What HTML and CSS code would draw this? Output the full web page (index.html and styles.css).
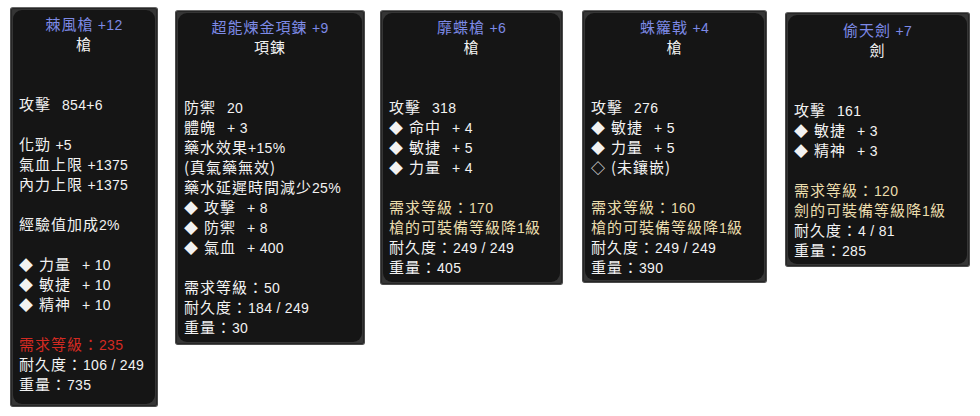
FILE: index.html
```html
<!DOCTYPE html>
<html>
  <head>
  <meta charset="utf-8">
  <title>物品說明</title>
  <link rel="stylesheet" href="styles.css">
  </head>
  <body>

<div id="items">

  <div class="tip tip1">
    <div class="tip-in">
      <div class="ln title">棘風槍 <span class="v">+12</span></div>
      <div class="ln type">槍</div>
      <div class="sp"></div>
      <div class="sp"></div>
      <div class="ln">攻擊<span class="gap"></span><span class="v">854+6</span></div>
      <div class="sp"></div>
      <div class="ln">化勁 <span class="v">+5</span></div>
      <div class="ln">氣血上限 <span class="v">+1375</span></div>
      <div class="ln">內力上限 <span class="v">+1375</span></div>
      <div class="sp"></div>
      <div class="ln">經驗值加成<span class="v">2%</span></div>
      <div class="sp"></div>
      <div class="ln"><span class="gem">◆</span>力量<span class="gap"></span><span class="v">+ 10</span></div>
      <div class="ln"><span class="gem">◆</span>敏捷<span class="gap"></span><span class="v">+ 10</span></div>
      <div class="ln"><span class="gem">◆</span>精神<span class="gap"></span><span class="v">+ 10</span></div>
      <div class="sp"></div>
      <div class="ln req">需求等級：<span class="v">235</span></div>
      <div class="ln">耐久度：<span class="v">106 / 249</span></div>
      <div class="ln">重量：<span class="v">735</span></div>
    </div>
  </div>

  <div class="tip tip2">
    <div class="tip-in">
      <div class="ln title">超能煉金項鍊 <span class="v">+9</span></div>
      <div class="ln type">項鍊</div>
      <div class="sp"></div>
      <div class="sp"></div>
      <div class="ln">防禦<span class="gap"></span><span class="v">20</span></div>
      <div class="ln">體魄<span class="gap"></span><span class="v">+ 3</span></div>
      <div class="ln">藥水效果<span class="v">+15%</span></div>
      <div class="ln">(真氣藥無效)</div>
      <div class="ln">藥水延遲時間減少<span class="v">25%</span></div>
      <div class="ln"><span class="gem">◆</span>攻擊<span class="gap"></span><span class="v">+ 8</span></div>
      <div class="ln"><span class="gem">◆</span>防禦<span class="gap"></span><span class="v">+ 8</span></div>
      <div class="ln"><span class="gem">◆</span>氣血<span class="gap"></span><span class="v">+ 400</span></div>
      <div class="sp"></div>
      <div class="ln">需求等級：<span class="v">50</span></div>
      <div class="ln">耐久度：<span class="v">184 / 249</span></div>
      <div class="ln">重量：<span class="v">30</span></div>
    </div>
  </div>

  <div class="tip tip3">
    <div class="tip-in">
      <div class="ln title">靡蝶槍 <span class="v">+6</span></div>
      <div class="ln type">槍</div>
      <div class="sp"></div>
      <div class="sp"></div>
      <div class="ln">攻擊<span class="gap"></span><span class="v">318</span></div>
      <div class="ln"><span class="gem">◆</span>命中<span class="gap"></span><span class="v">+ 4</span></div>
      <div class="ln"><span class="gem">◆</span>敏捷<span class="gap"></span><span class="v">+ 5</span></div>
      <div class="ln"><span class="gem">◆</span>力量<span class="gap"></span><span class="v">+ 4</span></div>
      <div class="sp"></div>
      <div class="ln gold">需求等級：<span class="v">170</span></div>
      <div class="ln gold">槍的可裝備等級降<span class="v">1</span>級</div>
      <div class="ln">耐久度：<span class="v">249 / 249</span></div>
      <div class="ln">重量：<span class="v">405</span></div>
    </div>
  </div>

  <div class="tip tip4">
    <div class="tip-in">
      <div class="ln title">蛛籮戟 <span class="v">+4</span></div>
      <div class="ln type">槍</div>
      <div class="sp"></div>
      <div class="sp"></div>
      <div class="ln">攻擊<span class="gap"></span><span class="v">276</span></div>
      <div class="ln"><span class="gem">◆</span>敏捷<span class="gap"></span><span class="v">+ 5</span></div>
      <div class="ln"><span class="gem">◆</span>力量<span class="gap"></span><span class="v">+ 5</span></div>
      <div class="ln"><span class="gem">◇</span>(未鑲嵌)</div>
      <div class="sp"></div>
      <div class="ln gold">需求等級：<span class="v">160</span></div>
      <div class="ln gold">槍的可裝備等級降<span class="v">1</span>級</div>
      <div class="ln">耐久度：<span class="v">249 / 249</span></div>
      <div class="ln">重量：<span class="v">390</span></div>
    </div>
  </div>

  <div class="tip tip5">
    <div class="tip-in">
      <div class="ln title">偷天劍 <span class="v">+7</span></div>
      <div class="ln type">劍</div>
      <div class="sp"></div>
      <div class="sp"></div>
      <div class="ln">攻擊<span class="gap"></span><span class="v">161</span></div>
      <div class="ln"><span class="gem">◆</span>敏捷<span class="gap"></span><span class="v">+ 3</span></div>
      <div class="ln"><span class="gem">◆</span>精神<span class="gap"></span><span class="v">+ 3</span></div>
      <div class="sp"></div>
      <div class="ln gold">需求等級：<span class="v">120</span></div>
      <div class="ln gold">劍的可裝備等級降<span class="v">1</span>級</div>
      <div class="ln">耐久度：<span class="v">4 / 81</span></div>
      <div class="ln">重量：<span class="v">285</span></div>
    </div>
  </div>

</div>

  </body>
</html>
```

FILE: styles.css
```css
body {background-color:#fff; margin:0; padding:0;}
body, td {font: 15px "Noto Sans CJK TC", "Noto Sans CJK SC", sans-serif;}

#items {display:flex; align-items:flex-start;}

/* frame of a tooltip: gray rim, dark rounded inside */
.tip {background-color:#353535; border:1px solid #4a4a4a; border-top-color:#666; border-radius:3px; padding:2px; box-sizing:border-box; box-shadow:inset 0 0 0 1px #262626;}
.tip-in {background-color:#151515; border-radius:9px; height:100%; box-sizing:border-box; padding:4px 6px 0 6px; color:#f2f2f2;}

.tip1 {margin:7px 0 0 10px; width:148px; height:400px;}
.tip2 {margin:10px 0 0 17px; width:190px; height:335px;}
.tip3 {margin:10px 0 0 15px; width:183px; height:275px;}
.tip4 {margin:10px 0 0 19px; width:185px; height:273px;}
.tip5 {margin:12px 0 0 18px; width:185px; height:255px;}
.tip5 .tip-in {padding-top:5px;}

.ln {height:20px; line-height:20px; white-space:nowrap; letter-spacing:1px;}
.sp {height:20px;}
.title {text-align:center; color:#7d8ae6;}
.type {text-align:center;}
.req {color:#d22a22;}
.gold {color:#eadcac;}

.v {font: 14px "Liberation Sans", Arial, sans-serif; letter-spacing:0.3px;}
.gap {display:inline-block; width:11px;}
.gem {display:inline-block; width:20px; font-size:14px; letter-spacing:0;}
```
